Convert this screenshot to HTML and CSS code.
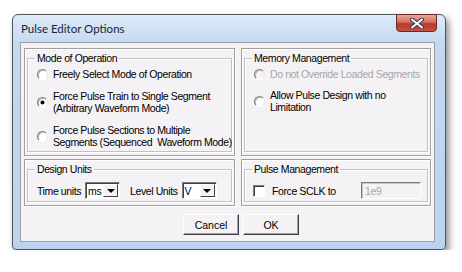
FILE: index.html
```html
<!DOCTYPE html>
<html lang="en">
<head>
    <meta charset="UTF-8">
    <title>Pulse Editor Options</title>
    <link rel="stylesheet" href="styles.css">
</head>
<body>
    <div class="window">
        <div class="titlebar">
            <span class="title">Pulse Editor Options</span>
            <span class="close">
                <svg width="14" height="11" viewBox="0 0 14 11">
                    <path d="M2 1.5 L12 9.5 M12 1.5 L2 9.5" stroke="#3a3a48" stroke-width="4" stroke-linecap="round"/>
                    <path d="M2 1.5 L12 9.5 M12 1.5 L2 9.5" stroke="#fff" stroke-width="2" stroke-linecap="round"/>
                </svg>
            </span>
        </div>

        <div class="client">
            <div class="panels">
                <div class="panel">
                    <fieldset class="group group-mode">
                        <legend>Mode of Operation</legend>
                        <div class="option">
                            <span class="radio"></span>
                            <span>Freely Select Mode of Operation</span>
                        </div>
                        <div class="option">
                            <span class="radio checked"></span>
                            <span>Force Pulse Train to Single Segment<br>(Arbitrary Waveform Mode)</span>
                        </div>
                        <div class="option">
                            <span class="radio"></span>
                            <span>Force Pulse Sections to Multiple<br>Segments (Sequenced&nbsp; Waveform Mode)</span>
                        </div>
                    </fieldset>
                </div>

                <div class="panel">
                    <fieldset class="group group-memory">
                        <legend>Memory Management</legend>
                        <div class="option disabled">
                            <span class="radio"></span>
                            <span>Do not Override Loaded Segments</span>
                        </div>
                        <div class="option">
                            <span class="radio"></span>
                            <span>Allow Pulse Design with no<br>Limitation</span>
                        </div>
                    </fieldset>
                </div>

                <div class="panel">
                    <fieldset class="group group-row">
                        <legend>Design Units</legend>
                        <div class="units">
                            <span>Time units</span>
                            <span class="combo"><span class="combo-value">ms</span><span class="combo-arrow"></span></span>
                            <span class="units-label">Level Units</span>
                            <span class="combo"><span class="combo-value">V</span><span class="combo-arrow"></span></span>
                        </div>
                    </fieldset>
                </div>

                <div class="panel">
                    <fieldset class="group group-row">
                        <legend>Pulse Management</legend>
                        <div class="units">
                            <span class="checkbox"></span>
                            <span class="sclk-label">Force SCLK to</span>
                            <span class="textbox">1e9</span>
                        </div>
                    </fieldset>
                </div>
            </div>

            <div class="buttons">
                <button type="button">Cancel</button>
                <button type="button">OK</button>
            </div>
        </div>
    </div>
</body>
</html>
```

FILE: styles.css
```css
* {
    box-sizing: border-box;
}

body {
    margin: 0;
    background-color: #fff;
    color: #000;
    font-family: "Liberation Sans", Arial, sans-serif;
    font-size: 10.5px;
    letter-spacing: -0.4px;
    line-height: 12px;
    white-space: nowrap;
}

.window {
    margin: 14px 0 0 12px;
    width: 434px;
    height: 236px;
    border: 1px solid #50565e;
    border-radius: 6px 6px 4px 4px;
    background: linear-gradient(#dfebf8, #c4d9f0 28px, #bcd3ed);
    padding: 0 10px 7px 7px;
    box-shadow: 3px 4px 7px rgba(0, 0, 0, 0.45);
    display: flex;
    flex-direction: column;
}

.titlebar {
    height: 27px;
    display: flex;
    justify-content: space-between;
    align-items: flex-start;
}

.title {
    margin: 8px 0 0 1px;
    font-family: Lato, "Liberation Sans", sans-serif;
    font-size: 11.5px;
    letter-spacing: 0;
    color: #14243a;
}

.close {
    margin: -1px -2px 0 0;
    width: 41px;
    height: 18px;
    border: 1px solid #6b2a24;
    border-radius: 0 0 4px 4px;
    background: linear-gradient(#e8a89a, #d4705f 45%, #b8382a 55%, #c85040);
    display: flex;
    justify-content: center;
    align-items: center;
}

.client {
    flex: 1;
    border: 1px solid #9aa0a8;
    background-color: #f4f2f4;
    padding: 5px 2px 0 3px;
}

.panels {
    display: grid;
    grid-template-columns: 211px 190px;
    grid-template-rows: 108px 47px;
    column-gap: 6px;
    row-gap: 3px;
}

.panel {
    border: 1px solid #a0a0a0;
    box-shadow: inset 1px 1px 0 #fff, 1px 1px 0 #fff;
    padding: 3px 2px 3px 2px;
    display: flex;
}

.group {
    flex: 1;
    margin: 0;
    border: 1px solid #c4c2c6;
    box-shadow: inset 1px 1px 0 #fff, 1px 1px 0 #fff;
    padding: 3px 4px 0 9px;
    min-width: 0;
}

.group legend {
    padding: 0 2px;
    margin-left: -2px;
    line-height: 13px;
}

.option {
    display: flex;
    align-items: center;
    gap: 5px;
    margin-bottom: 10px;
}

.group-mode .option:first-of-type {
    margin-bottom: 10px;
}

.group-memory .option:first-of-type {
    margin-bottom: 9px;
}

.disabled {
    color: #a8a6aa;
}

.radio {
    flex: none;
    position: relative;
    width: 11px;
    height: 11px;
    border-radius: 50%;
    background-color: #fff;
    border: 1px solid;
    border-color: #7c7c7c #e8e8e8 #fff #7c7c7c;
    box-shadow: inset 1px 1px 0 #c0c0c0;
}

.disabled .radio {
    background-color: #f4f2f4;
}

.radio.checked::after {
    content: "";
    position: absolute;
    left: 3px;
    top: 3px;
    width: 3px;
    height: 3px;
    border-radius: 50%;
    background-color: #000;
    box-shadow: 0 0 0 0.5px #000;
}

.units {
    display: flex;
    align-items: center;
    padding-top: 3px;
}

.combo {
    margin-left: 4px;
    width: 35px;
    height: 17px;
    background-color: #fff;
    border: 1px solid;
    border-color: #7c7c7c #fff #fff #7c7c7c;
    box-shadow: inset 1px 1px 0 #404040;
    display: flex;
    justify-content: space-between;
    padding: 1px 1px 1px 2px;
}

.combo-value {
    padding-top: 1px;
}

.combo-arrow {
    width: 15px;
    background-color: #f4f2f4;
    border: 1px solid;
    border-color: #fff #404040 #404040 #fff;
    display: flex;
    justify-content: center;
    align-items: center;
}

.combo-arrow::after {
    content: "";
    border-left: 4px solid transparent;
    border-right: 4px solid transparent;
    border-top: 4px solid #000;
    margin-top: 1px;
}

.units-label {
    margin-left: 10px;
}

.checkbox {
    width: 12px;
    height: 12px;
    background-color: #fff;
    border: 1px solid;
    border-color: #7c7c7c #fff #fff #7c7c7c;
    box-shadow: inset 1px 1px 0 #404040;
    margin-left: -1px;
}

.sclk-label {
    margin-left: 7px;
}

.textbox {
    margin-left: auto;
    margin-right: 2px;
    width: 60px;
    height: 17px;
    border: 1px solid;
    border-color: #7c7c7c #fff #fff #7c7c7c;
    box-shadow: inset 1px 1px 0 #c8c6ca;
    color: #a8a6aa;
    padding: 2px 3px;
}

.buttons {
    display: flex;
    gap: 4px;
    padding: 8px 0 0 159px;
}

.buttons button {
    width: 56px;
    height: 21px;
    font: inherit;
    color: #000;
    background-color: #f4f2f4;
    border: 1px solid;
    border-color: #fff #404040 #404040 #fff;
    box-shadow: inset -1px -1px 0 #a0a0a0;
    padding: 0;
}
```
